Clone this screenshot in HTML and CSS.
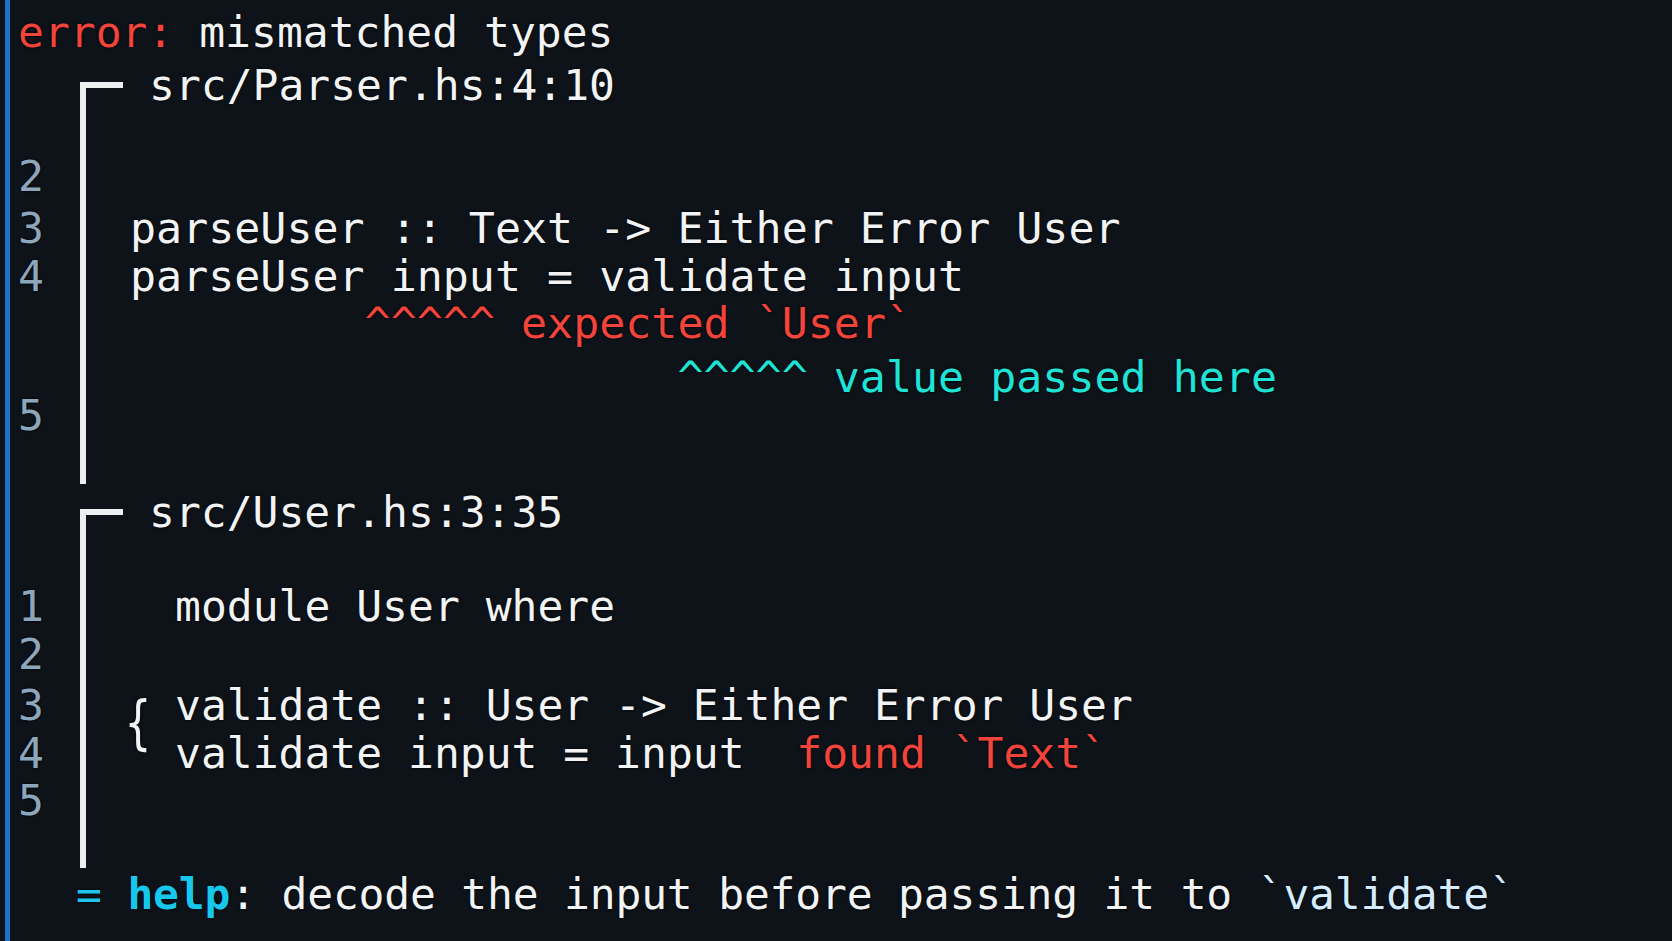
FILE: index.html
```html
<!DOCTYPE html>
<html lang="en">
<head>
<meta charset="utf-8">
<title>error: mismatched types</title>
<link rel="stylesheet" href="styles.css">
</head>
<body>
<main class="term">
  <div class="title"><span class="err">error:</span> mismatched types</div>

  <section class="snippet snippet-a">
    <span class="corner r1"></span>
    <span class="path r1"><span>src/Parser.hs:4:10</span></span>
    <span class="bar"></span>

    <span class="num r3">2</span>
    <span class="num r4">3</span>
    <span class="code r4"><span>parseUser :: Text -&gt; Either Error User</span></span>
    <span class="num r5">4</span>
    <span class="code r5"><span>parseUser input = validate input</span></span>
    <span class="code r6"><span>         <span class="red">^^^^^ expected `User`</span></span></span>
    <span class="code r7"><span>                     <span class="teal">^^^^^ value passed here</span></span></span>
    <span class="num r8">5</span>
  </section>

  <section class="snippet snippet-b">
    <span class="corner r1"></span>
    <span class="path r1"><span>src/User.hs:3:35</span></span>
    <span class="bar"></span>

    <span class="num r3">1</span>
    <span class="code indent r3"><span>module User where</span></span>
    <span class="num r4">2</span>
    <span class="num r5">3</span>
    <span class="brace">{</span>
    <span class="code indent r5"><span>validate :: User -&gt; Either Error User</span></span>
    <span class="num r6">4</span>
    <span class="code indent r6"><span>validate input = input  <span class="red">found `Text`</span></span></span>
    <span class="num r7">5</span>
  </section>

  <div class="help"><span class="eq">=</span> <span class="kw">help</span>: decode the input before passing it to <span class="tick">`validate`</span></div>
</main>
</body>
</html>
```

FILE: styles.css
```css
html, body {
  margin: 0;
  padding: 0;
  background: #0d1319;
  height: 100%;
}

body {
  padding-left: 5px;
  box-sizing: border-box;
  overflow: hidden;
}

.term {
  height: 100%;
  box-sizing: border-box;
  border-left: 5px solid #1a74c9;
  font-family: "DejaVu Sans Mono", "Liberation Mono", monospace;
  font-size: 43px;
  color: #f1f3f4;
  display: flex;
  flex-direction: column;
  white-space: pre;
  text-shadow: 0 0 3px rgba(0, 0, 0, 0.9);
}

.title {
  margin-top: 8px;
  height: 48px;
  line-height: 48px;
  padding-left: 8px;
}

.err, .red {
  color: #f2443a;
}

.teal {
  color: #1ee3d6;
}

.snippet {
  display: grid;
  grid-template-columns: 70px 50px 1fr;
}

.snippet-a {
  margin-top: 7px;
  grid-template-rows: 48px 41px 48px 56px 40px 54px 54px 22px 58px;
}

.snippet-b {
  margin-top: 6px;
  grid-template-rows: 48px 44px 48px 48px 54px 42px 52px 42px;
}

.snippet > span {
  display: flex;
  align-items: center;
}

.r1 { grid-row: 1; }
.r3 { grid-row: 3; }
.r4 { grid-row: 4; }
.r5 { grid-row: 5; }
.r6 { grid-row: 6; }
.r7 { grid-row: 7; }
.r8 { grid-row: 8; }

.num {
  grid-column: 1;
  padding-left: 8px;
  color: #8ea6bb;
}

.corner {
  grid-column: 2;
  align-self: end;
  width: 37px;
  height: 23px;
  border-top: 6px solid #eceef0;
  border-left: 6px solid #eceef0;
}

.bar {
  grid-column: 2;
  grid-row: 2 / -1;
  width: 0;
  border-left: 6px solid #eceef0;
}

.path {
  grid-column: 3;
  padding-left: 19px;
  margin-top: -4px;
}

.code {
  grid-column: 3;
}

.snippet-a .code {
  font-size: 43.3px;
}

.code.indent {
  padding-left: 45px;
}

.brace {
  grid-column: 3;
  grid-row: 5 / 7;
  width: 26px;
  margin-left: -5px;
  justify-content: center;
  transform: scaleY(1.35);
  margin-top: -6px;
}

.help {
  height: 52px;
  line-height: 52px;
  padding-left: 66px;
  letter-spacing: -0.2px;
}

.eq {
  color: #1fc6ea;
}

.kw {
  color: #17c8ec;
  font-weight: bold;
}

.tick {
  color: #d4ecff;
}
```
